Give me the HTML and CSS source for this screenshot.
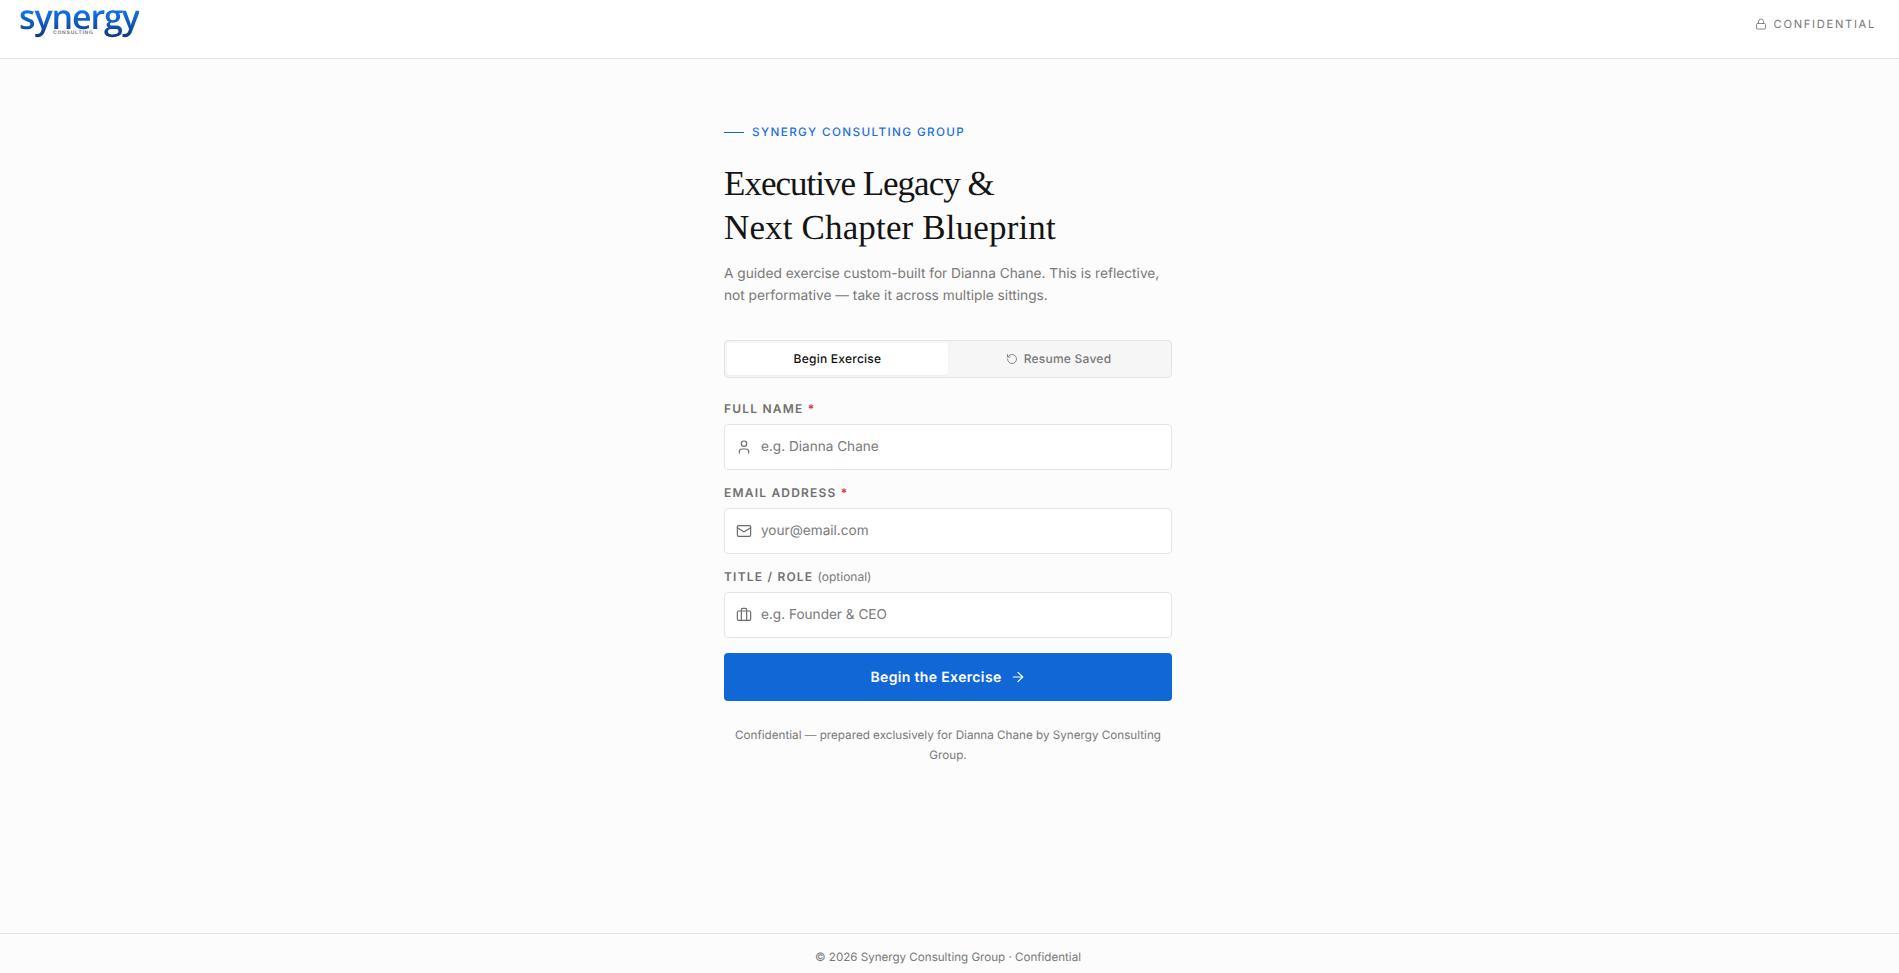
FILE: index.html
```html
<!DOCTYPE html>
<html lang="en">
<head>
  <meta charset="UTF-8" />
  <meta name="viewport" content="width=device-width, initial-scale=1.0" />
  <title>Executive Legacy &amp; Next Chapter Blueprint</title>
  <link rel="stylesheet" href="styles.css">
</head>
<body>
  <header class="topbar">
    <div class="logo">
      <span class="logo-word">synergy</span>
      <span class="logo-sub">CONSULTING</span>
    </div>
    <div class="conf">
      <svg class="icon" width="12" height="12" viewBox="0 0 24 24"><rect x="3" y="11" width="18" height="11" rx="2"/><path d="M7 11V7a5 5 0 0 1 10 0v4"/></svg>
      <span>CONFIDENTIAL</span>
    </div>
  </header>

  <main class="page">
    <div class="panel">
      <div class="eyebrow"><span class="eyebrow-line"></span>SYNERGY CONSULTING GROUP</div>
      <h1><span class="h1-first">Executive Legacy &amp;</span><br>Next Chapter Blueprint</h1>
      <p class="intro">A guided exercise custom-built for Dianna Chane. This is reflective, not performative — take it across multiple sittings.</p>

      <div class="tabs">
        <button type="button" class="tab active">Begin Exercise</button>
        <button type="button" class="tab">
          <svg class="icon" width="12" height="12" viewBox="0 0 24 24"><path d="M3 12a9 9 0 1 0 9-9 9.75 9.75 0 0 0-6.74 2.74L3 8"/><path d="M3 3v5h5"/></svg>
          Resume Saved
        </button>
      </div>

      <form class="form">
        <div class="form-group">
          <label for="fullName">FULL NAME <span class="req">*</span></label>
          <div class="field">
            <svg class="icon" width="16" height="16" viewBox="0 0 24 24"><path d="M19 21v-2a4 4 0 0 0-4-4H9a4 4 0 0 0-4 4v2"/><circle cx="12" cy="7" r="4"/></svg>
            <input type="text" id="fullName" placeholder="e.g. Dianna Chane" />
          </div>
        </div>
        <div class="form-group">
          <label for="email">EMAIL ADDRESS <span class="req">*</span></label>
          <div class="field">
            <svg class="icon" width="16" height="16" viewBox="0 0 24 24"><rect x="2" y="4" width="20" height="16" rx="2"/><path d="m22 7-8.97 5.7a1.94 1.94 0 0 1-2.06 0L2 7"/></svg>
            <input type="email" id="email" placeholder="your@email.com" />
          </div>
        </div>
        <div class="form-group">
          <label for="role">TITLE / ROLE <span class="opt">(optional)</span></label>
          <div class="field">
            <svg class="icon" width="16" height="16" viewBox="0 0 24 24"><path d="M16 20V4a2 2 0 0 0-2-2h-4a2 2 0 0 0-2 2v16"/><rect x="2" y="6" width="20" height="14" rx="2"/></svg>
            <input type="text" id="role" placeholder="e.g. Founder &amp; CEO" />
          </div>
        </div>
        <button type="submit" class="submit">
          Begin the Exercise
          <svg class="icon" width="16" height="16" viewBox="0 0 24 24"><path d="M5 12h14"/><path d="m12 5 7 7-7 7"/></svg>
        </button>
      </form>

      <p class="note">Confidential — prepared exclusively for Dianna Chane by Synergy Consulting Group.</p>
    </div>
  </main>

  <footer class="footer">© 2026 Synergy Consulting Group · Confidential</footer>
</body>
</html>
```

FILE: styles.css
```css
* { box-sizing: border-box; margin: 0; padding: 0; text-rendering: geometricPrecision; }
html, body { height: 100%; }
body {
  font-family: Inter, Arial, sans-serif;
  background: #fcfcfc;
  color: #787878;
  display: flex;
  flex-direction: column;
  min-height: 100vh;
}
.icon {
  fill: none;
  stroke: currentColor;
  stroke-width: 1.75;
  stroke-linecap: round;
  stroke-linejoin: round;
  flex-shrink: 0;
}

/* Top bar */
.topbar {
  height: 59px;
  flex-shrink: 0;
  background: #fff;
  border-bottom: 1px solid #e4e4e4;
  display: flex;
  justify-content: space-between;
  padding: 0 23px 0 19px;
}
.logo { display: flex; flex-direction: column; align-items: flex-start; width: 120px; }
.logo-word {
  font-family: "Open Sans", sans-serif;
  font-size: 34px;
  font-weight: 600;
  line-height: 26px;
  letter-spacing: -1.1px;
  margin-top: 3px;
  padding-bottom: 12px;
  background: linear-gradient(180deg, #1370e0 25%, #0f52b0 62%, #0b2f72 100%);
  -webkit-background-clip: text;
  background-clip: text;
  color: transparent;
}
.logo-sub {
  font-family: "Liberation Sans", sans-serif;
  font-size: 5px;
  font-weight: 700;
  line-height: 5px;
  letter-spacing: 0.8px;
  color: #777;
  margin: -10px 0 0 34px;
}
.conf {
  display: flex;
  align-items: center;
  gap: 7px;
  font-size: 11.2px;
  letter-spacing: 0.15em;
  color: #787878;
  height: 48px;
}

/* Main panel */
.page { flex: 1; display: flex; justify-content: center; padding: 64px 3px 0 0; }
.panel { width: 448px; }
.eyebrow {
  display: flex;
  align-items: center;
  gap: 8px;
  font-size: 11.68px;
  font-weight: 500;
  letter-spacing: 0.12em;
  color: #1a6fdc;
  line-height: 19px;
  margin-bottom: 20px;
}
.eyebrow-line { width: 20px; height: 1px; background: #1166d6; }
h1 {
  font-family: "Liberation Serif", serif;
  font-size: 35px;
  font-weight: 400;
  line-height: 44px;
  letter-spacing: 0.15px;
  color: #141414;
  margin-bottom: 13px;
}
.h1-first { letter-spacing: -1px; }
.intro { font-size: 13.7px; line-height: 22px; margin-bottom: 33px; }

.tabs {
  display: flex;
  height: 38px;
  padding: 2px;
  background: #f6f6f6;
  border: 1px solid #e4e4e4;
  border-radius: 4px;
  margin-bottom: 23px;
}
.tab {
  flex: 1;
  display: flex;
  align-items: center;
  justify-content: center;
  gap: 6px;
  padding-bottom: 1px;
  border: none;
  background: none;
  border-radius: 3px;
  font-family: inherit;
  font-size: 12px;
  font-weight: 500;
  letter-spacing: 0.02em;
  color: #787878;
}
.tab.active { background: #fff; color: #111; box-shadow: 0 1px 2px rgba(0,0,0,0.04); }

.form-group { margin-bottom: 15px; }
.form-group label {
  display: block;
  font-size: 12px;
  font-weight: 600;
  letter-spacing: 0.1em;
  line-height: 16px;
  color: #707070;
  margin-bottom: 7px;
}
.req { color: #e0303a; }
.opt { font-weight: 400; letter-spacing: 0; color: #787878; }
.field {
  display: flex;
  align-items: center;
  gap: 9px;
  height: 46px;
  padding: 0 11px;
  background: #fff;
  border: 1px solid #e4e4e4;
  border-radius: 4px;
  color: #6b6b6b;
}
.field input {
  flex: 1;
  border: none;
  outline: none;
  background: none;
  font-family: inherit;
  font-size: 13.6px;
  color: #111;
}
.field input::placeholder { color: #7a7a7a; opacity: 1; }

.submit {
  width: 100%;
  height: 48px;
  margin-top: 1px;
  display: flex;
  align-items: center;
  justify-content: center;
  gap: 8px;
  border: none;
  border-radius: 4px;
  background: #1167d6;
  color: #fff;
  font-family: inherit;
  font-size: 14px;
  font-weight: 600;
  letter-spacing: 0.025em;
}
.note {
  font-size: 11.68px;
  line-height: 20px;
  text-align: center;
  margin-top: 24px;
}

.footer {
  height: 40px;
  flex-shrink: 0;
  border-top: 1px solid #e4e4e4;
  display: flex;
  align-items: center;
  justify-content: center;
  padding: 6px 3px 0 0;
  font-size: 11.6px;
}
```
